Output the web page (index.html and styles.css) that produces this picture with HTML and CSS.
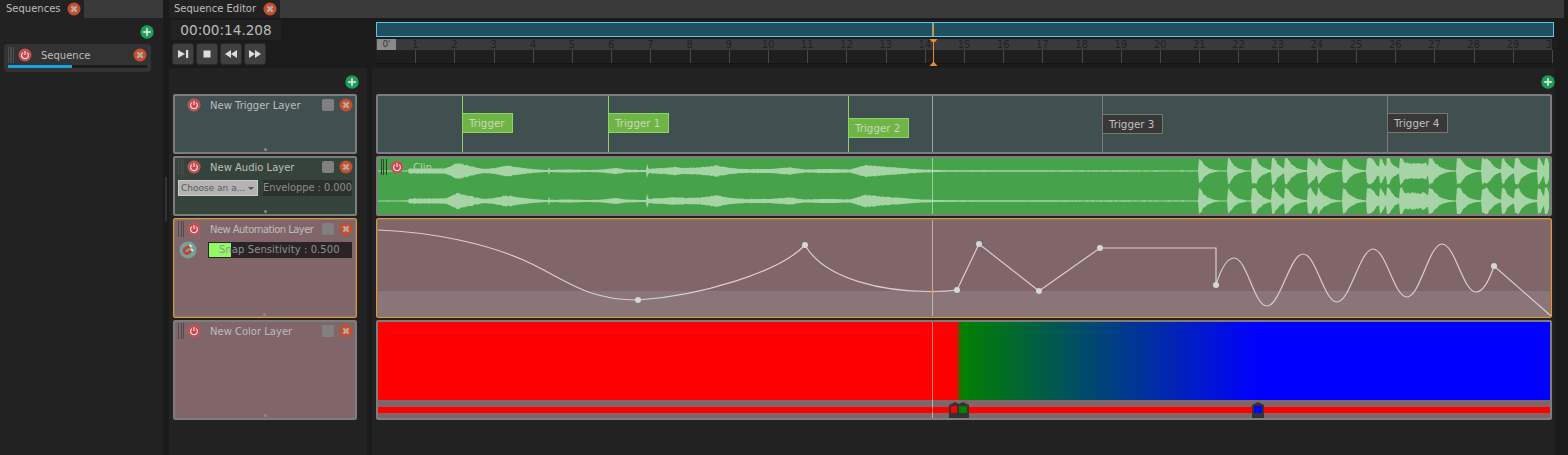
FILE: index.html
```html
<!DOCTYPE html>
<html lang="en">
  <head>
    <meta charset="UTF-8" />
    <title>Sequence Editor</title>
    <link rel="stylesheet" href="styles.css">
  </head>
  <body>
    <!-- shared icons -->
    <svg class="defs" width="0" height="0">
      <symbol id="i-power" viewBox="0 0 14 14">
        <circle cx="7" cy="7" r="6.5" fill="#c9565b"/>
        <circle cx="7" cy="7" r="5.5" fill="#c4484f"/>
        <path d="M4.9 4.6a3.4 3.4 0 1 0 4.2 0" fill="none" stroke="#f2e2e2" stroke-width="1.2"/>
        <path d="M7 3v4" stroke="#f2e2e2" stroke-width="1.2"/>
      </symbol>
      <symbol id="i-close" viewBox="0 0 14 14">
        <circle cx="7" cy="7" r="6.5" fill="#c44f2e"/>
        <path d="M4.4 4.4l5.2 5.2M9.6 4.4l-5.2 5.2" stroke="#b9a8a2" stroke-width="2.2"/>
      </symbol>
      <symbol id="i-add" viewBox="0 0 14 14">
        <circle cx="7" cy="7" r="6.7" fill="#1f9d58"/>
        <path d="M7 3.2v7.6M3.2 7h7.6" stroke="#c9ddcf" stroke-width="2"/>
      </symbol>
    </svg>

    <!-- Sequences panel -->
    <aside class="sequences">
      <div class="tabbar">
        <div class="tab tab-seq">Sequences <svg class="ico tab-x"><use href="#i-close"/></svg></div>
      </div>
      <div class="add-row add-row-seq"><svg class="ico"><use href="#i-add"/></svg></div>
      <div class="seq-card">
        <div class="seq-top">
          <span class="grip"></span>
          <svg class="ico"><use href="#i-power"/></svg>
          <span class="seq-name">Sequence</span>
          <svg class="ico"><use href="#i-close"/></svg>
        </div>
        <div class="seq-progress"><div class="seq-fill"></div></div>
      </div>
    </aside>

    <div class="splitter"><span class="splitter-grip"></span></div>

    <!-- Sequence editor -->
    <main class="editor">
      <div class="tabbar">
        <div class="tab tab-editor">Sequence Editor <svg class="ico tab-x"><use href="#i-close"/></svg></div>
      </div>

      <div class="transport">
        <div class="transport-left">
          <div class="timecode">00:00:14.208</div>
          <div class="buttons">
            <button class="tbtn"><svg viewBox="0 0 14 14"><path d="M2 3l7 4-7 4z M10 3h2.2v8H10z" fill="#ddd"/></svg></button>
            <button class="tbtn"><svg viewBox="0 0 14 14"><path d="M3.5 3.5h7v7h-7z" fill="#ddd"/></svg></button>
            <button class="tbtn"><svg viewBox="0 0 14 14"><path d="M7 3v8L1 7z M13 3v8L7 7z" fill="#ddd"/></svg></button>
            <button class="tbtn"><svg viewBox="0 0 14 14"><path d="M1 3v8l6-4z M7 3v8l6-4z" fill="#ddd"/></svg></button>
          </div>
        </div>
        <div class="transport-right">
          <div class="seekbar"><span class="seek-head"></span></div>
          <div class="ruler">
            <span class="zero">0'</span>
            <div class="cell"><b>1</b></div><div class="cell"><b>2</b></div><div class="cell"><b>3</b></div>
            <div class="cell"><b>4</b></div><div class="cell"><b>5</b></div><div class="cell"><b>6</b></div>
            <div class="cell"><b>7</b></div><div class="cell"><b>8</b></div><div class="cell"><b>9</b></div>
            <div class="cell"><b>10</b></div><div class="cell"><b>11</b></div><div class="cell"><b>12</b></div>
            <div class="cell"><b>13</b></div><div class="cell"><b>14</b></div><div class="cell"><b>15</b></div>
            <div class="cell"><b>16</b></div><div class="cell"><b>17</b></div><div class="cell"><b>18</b></div>
            <div class="cell"><b>19</b></div><div class="cell"><b>20</b></div><div class="cell"><b>21</b></div>
            <div class="cell"><b>22</b></div><div class="cell"><b>23</b></div><div class="cell"><b>24</b></div>
            <div class="cell"><b>25</b></div><div class="cell"><b>26</b></div><div class="cell"><b>27</b></div>
            <div class="cell"><b>28</b></div><div class="cell"><b>29</b></div><div class="cell"><b>30</b></div>
            <svg class="ruler-head" width="9" height="28" viewBox="0 0 9 28">
              <path d="M0.5 0h8L6 3H3zM4 3h1v22H4zM4.5 22.500L8.500 27h-8z" fill="#f0892a"/>
            </svg>
          </div>
        </div>
      </div>

      <div class="body">
        <!-- layer headers -->
        <div class="headers">
          <div class="add-row"><svg class="ico"><use href="#i-add"/></svg></div>

          <div class="layer layer-short trigger-bg">
            <div class="layer-top">
              <span class="grip"></span>
              <svg class="ico"><use href="#i-power"/></svg>
              <span class="layer-name">New Trigger Layer</span>
              <span class="toggle"></span>
              <svg class="ico"><use href="#i-close"/></svg>
            </div>
            <span class="dot"></span>
          </div>

          <div class="layer layer-short audio-bg">
            <div class="layer-top">
              <span class="grip"></span>
              <svg class="ico"><use href="#i-power"/></svg>
              <span class="layer-name">New Audio Layer</span>
              <span class="toggle"></span>
              <svg class="ico"><use href="#i-close"/></svg>
            </div>
            <div class="layer-controls">
              <div class="select"><span>Choose an a...</span><i></i></div>
              <div class="param">Enveloppe : 0.000</div>
            </div>
            <span class="dot"></span>
          </div>

          <div class="layer layer-tall auto-bg selected">
            <div class="layer-top">
              <span class="grip"></span>
              <svg class="ico"><use href="#i-power"/></svg>
              <span class="layer-name layer-name-long">New Automation Layer</span>
              <span class="toggle"></span>
              <svg class="ico"><use href="#i-close"/></svg>
            </div>
            <div class="layer-controls snap-row">
              <svg class="magnet" viewBox="0 0 18 18">
                <circle cx="9" cy="9" r="8.500" fill="#6fa39b"/>
                <path d="M11.500 4.500L6 7.500a3 3 0 0 0 3 5l4-3.500" fill="none" stroke="#c9402c" stroke-width="2.600"/>
                <path d="M10.500 3.500l2 2.500M12 8l2 2" stroke="#e6e6e6" stroke-width="2"/>
              </svg>
              <div class="slider"><span class="slider-fill"></span><span class="slider-text">Snap Sensitivity : 0.500</span></div>
            </div>
            <span class="dot"></span>
          </div>

          <div class="layer layer-tall auto-bg">
            <div class="layer-top">
              <span class="grip"></span>
              <svg class="ico"><use href="#i-power"/></svg>
              <span class="layer-name">New Color Layer</span>
              <span class="toggle"></span>
              <svg class="ico"><use href="#i-close"/></svg>
            </div>
            <span class="dot"></span>
          </div>
        </div>

        <div class="gutter"></div>

        <!-- timelines -->
        <div class="timelines">
          <div class="add-row"><svg class="ico"><use href="#i-add"/></svg></div>

          <div class="clip layer-short trigger-bg">
            <i class="trig-line on" style="left:84px"></i>
            <i class="trig-line on" style="left:230px"></i>
            <i class="trig-line on" style="left:470px"></i>
            <i class="trig-line" style="left:724px"></i>
            <i class="trig-line" style="left:1009px"></i>
            <span class="trigger on" style="left:84px;top:17px;width:51px">Trigger</span>
            <span class="trigger on" style="left:230px;top:17px">Trigger 1</span>
            <span class="trigger on" style="left:470px;top:22px">Trigger 2</span>
            <span class="trigger" style="left:724px;top:18px">Trigger 3</span>
            <span class="trigger" style="left:1009px;top:17px">Trigger 4</span>
            <i class="playhead"></i>
          </div>

          <div class="clip layer-short audio-clip">
            <svg class="wave" viewBox="378 158 1172 56"><path id="wave" fill="#a6d4a6"/></svg>
            <div class="clip-top">
              <span class="grip"></span>
              <svg class="ico"><use href="#i-power"/></svg>
              <span class="clip-name">Clip</span>
            </div>
            <i class="playhead"></i>
          </div>

          <div class="clip layer-tall auto-bg selected">
            <div class="auto-band"></div>
            <i class="playhead"></i>
            <svg class="curve" viewBox="378 220 1172 96">
              <path d="M378,230 C430,232 490,243 534,265 C570,283 590,300 638,300 C700,296 780,272 805,245 C825,280 885,292 933,291.500 C945,291.500 950,291 957,290 L979,244 L1039,291 L1100,248 L1216,248 L1216,285 C1220,272 1226,258 1234,258 C1247,258 1254,306 1267,306 C1280,306 1290,254 1303,254 C1316,254 1324,302 1337,302 C1350,302 1360,249 1373,249 C1386,249 1394,297 1407,297 C1420,297 1429,244 1442,244 C1455,244 1463,292 1476,292 C1484,292 1490,278 1494,266 L1551,316" fill="none" stroke="#d6d0d0" stroke-width="1.200"/>
              <g fill="#d4d8d8">
                <circle cx="638" cy="300" r="3"/><circle cx="805" cy="245" r="3"/>
                <circle cx="957" cy="290" r="3"/><circle cx="979" cy="244" r="3"/>
                <circle cx="1039" cy="291" r="3"/><circle cx="1100" cy="248" r="3"/>
                <circle cx="1216" cy="285" r="3"/><circle cx="1494" cy="266" r="3"/>
              </g>
              <circle cx="933" cy="291.500" r="1.500" fill="#f0a030"/>
            </svg>
          </div>

          <div class="clip layer-tall auto-bg">
            <div class="gradient"></div>
            <div class="preview"></div>
            <svg class="marker" style="left:571px" viewBox="0 0 12 16"><path d="M0 16V3l6-3 6 3v13z" fill="#333"/><path d="M2 4h8v7H2z" fill="#f00"/></svg>
            <svg class="marker" style="left:579px" viewBox="0 0 12 16"><path d="M0 16V3l6-3 6 3v13z" fill="#333"/><path d="M2 4h8v7H2z" fill="#008000"/></svg>
            <svg class="marker" style="left:874px" viewBox="0 0 12 16"><path d="M0 16V3l6-3 6 3v13z" fill="#333"/><path d="M2 4h8v7H2z" fill="#00f"/></svg>
            <i class="playhead"></i>
          </div>
        </div>
      </div>
    </main>

    <script src="wave.js"></script>
  </body>
</html>
```

FILE: styles.css
```css
body {
  font-family: "DejaVu Sans", sans-serif;
  font-size: 10px;
  color: #bdbdbd;
  background: #1b1b1b;
  display: flex;
  height: 455px;
  margin: 0;
  overflow: hidden;
}
.defs {
  position: absolute;
}
.ico {
  width: 14px;
  height: 14px;
  flex: none;
}

/* Tabs */
.tabbar {
  height: 18px;
  background: #3a3a3a;
  display: flex;
}
.tab {
  background: #222;
  line-height: 16px;
  display: flex;
  align-items: center;
  font-size: 10px;
}
.tab-seq {
  width: 78px;
  padding-left: 6px;
}
.tab-editor {
  width: 106px;
  padding-left: 5px;
}
.tab-x {
  margin-left: auto;
  margin-right: 3px;
}

/* Sequences panel */
.sequences {
  width: 163px;
  background: #222;
  flex: none;
}
.add-row {
  height: 26px;
  display: flex;
  justify-content: flex-end;
  align-items: center;
  padding: 2px 8px 0 0;
  box-sizing: border-box;
}
.add-row-seq {
  padding-right: 9px;
}
.seq-card {
  width: 147px;
  height: 28px;
  margin-left: 4px;
  background: #333;
  border-radius: 4px;
  box-sizing: border-box;
  padding: 3px 4px;
}
.seq-top {
  display: flex;
  align-items: center;
  height: 15px;
}
.seq-name {
  margin-left: 9px;
  padding-top: 2px;
  flex: 1;
}
.seq-progress {
  height: 3px;
  margin-top: 3px;
  background: #1c1c1c;
}
.seq-fill {
  width: 46%;
  height: 100%;
  background: #18a6e0;
}
.grip {
  width: 6px;
  height: 16px;
  margin-right: 4px;
  flex: none;
  background: repeating-linear-gradient(90deg, #4c4c4c 0 1px, transparent 1px 2.5px);
}
.splitter {
  width: 6px;
  flex: none;
  padding-top: 177px;
  box-sizing: border-box;
}
.splitter-grip {
  display: block;
  width: 2px;
  height: 44px;
  margin-left: 2px;
  background: #333;
}

/* Transport */
.editor {
  flex: 1;
  min-width: 0;
}
.editor > .tabbar {
  margin-right: 4px;
}
.transport {
  height: 50px;
  display: flex;
  background: #1b1b1b;
}
.transport-left {
  width: 203px;
  padding: 2px 0 0 2px;
  box-sizing: border-box;
  flex: none;
}
.timecode {
  width: 110px;
  height: 20px;
  background: #222;
  text-align: center;
  font-size: 13.600px;
  line-height: 20px;
  color: #bcbcbc;
}
.buttons {
  display: flex;
  gap: 2px;
  margin: 3px 0 0 1px;
}
.tbtn {
  width: 22px;
  height: 22px;
  padding: 3px;
  border: 1px solid #2c2c2c;
  border-radius: 3px;
  background: #404040;
  box-sizing: border-box;
}
.tbtn svg {
  display: block;
  width: 14px;
  height: 14px;
}
.transport-right {
  width: 1178px;
  margin-left: 4px;
  position: relative;
}
.seekbar {
  height: 15px;
  margin-top: 4px;
  border: 1px solid #5cc6ee;
  background: #1f5060;
  box-sizing: border-box;
  position: relative;
}
.seek-head {
  position: absolute;
  left: 555px;
  top: 0;
  width: 2px;
  height: 13px;
  background: #b09a6c;
}
.ruler {
  display: flex;
  width: 1176px;
  height: 25px;
  margin-top: 2px;
  position: relative;
  background: linear-gradient(#3a3a3a 0 11px, #1f1f1f 11px);
  border-bottom: 1px solid #141414;
  box-sizing: border-box;
}
.zero {
  position: absolute;
  left: 1px;
  top: 0;
  width: 19px;
  height: 11px;
  background: #8a8a8a;
  color: #333;
  font-size: 9px;
  line-height: 11px;
  text-align: center;
}
.cell {
  flex: 1;
  position: relative;
}
.cell::after {
  content: "";
  position: absolute;
  right: -1px;
  top: 11px;
  bottom: 0;
  width: 1px;
  background: #484848;
}
.cell b {
  position: absolute;
  right: -10px;
  top: 0;
  width: 20px;
  text-align: center;
  font-weight: normal;
  font-size: 10px;
  line-height: 12px;
  color: #222;
}
.ruler-head {
  position: absolute;
  left: 553px;
  top: 0;
}

/* Main area */
.body {
  display: flex;
  height: 387px;
}
.headers {
  width: 198px;
  background: #222;
  flex: none;
}
.headers .layer {
  margin-left: 4px;
  width: 184px;
}
.gutter {
  width: 5px;
  flex: none;
}
.timelines {
  width: 1183px;
  background: #222;
  flex: none;
}
.timelines .add-row {
  padding-right: 0;
  width: 1183px;
  padding-left: 1169px;
  justify-content: flex-start;
}
.timelines .clip {
  margin-left: 4px;
  width: 1176px;
}
.layer, .clip {
  position: relative;
  border: 2px solid #7d7d7d;
  border-radius: 2px;
  box-sizing: border-box;
  margin-bottom: 2px;
}
.layer-short {
  height: 60px;
}
.layer-tall {
  height: 100px;
}
.trigger-bg {
  background: #405050;
}
.audio-bg {
  background: #35443a;
}
.auto-bg {
  background: #806569;
}
.selected {
  border: 1px solid #f39325;
  box-shadow: inset 0 0 0 1px #7d7d7d;
  padding: 1px;
}
.layer-top {
  display: flex;
  align-items: center;
  height: 18px;
  padding-left: 3px;
}
.layer-top .grip {
  margin-right: 3px;
}
.layer-name {
  margin-left: 9px;
  flex: 1;
  white-space: nowrap;
}
.layer-name-long {
  letter-spacing: -0.550px;
}
.toggle {
  width: 12px;
  height: 12px;
  border-radius: 2px;
  background: #808080;
  margin-right: 5px;
}
.layer-top .ico:last-child {
  margin-right: 2px;
}
.dot {
  position: absolute;
  left: 89px;
  bottom: 1px;
  width: 3px;
  height: 3px;
  border-radius: 50%;
  background: #8b8b8b;
}

/* Layer controls */
.layer-controls {
  display: flex;
  gap: 5px;
  margin-top: 4px;
  padding-left: 3px;
}
.select {
  width: 80px;
  height: 16px;
  background: #b3b3b3;
  border: 1px solid #ccc;
  box-sizing: border-box;
  color: #5a5a5a;
  display: flex;
  align-items: center;
  padding-left: 2px;
  font-size: 9px;
  overflow: hidden;
}
.select span {
  flex: 1;
  white-space: nowrap;
}
.select i {
  width: 0;
  height: 0;
  margin-right: 3px;
  border: 3px solid transparent;
  border-top: 3px solid #555;
  border-bottom: 0;
}
.param {
  width: 89px;
  height: 16px;
  background: #2b322c;
  color: #8e8e8e;
  font-size: 9.800px;
  line-height: 16px;
  white-space: nowrap;
}
.snap-row {
  gap: 11px;
  padding-left: 4px;
  margin-top: 3px;
  align-items: center;
}
.magnet {
  width: 18px;
  height: 18px;
  flex: none;
}
.slider {
  width: 144px;
  height: 16px;
  background: #2a2327;
  position: relative;
  color: #929292;
  line-height: 16px;
  padding-left: 11px;
  letter-spacing: 0.080px;
  box-sizing: border-box;
}
.slider-fill {
  position: absolute;
  left: 1px;
  top: 1px;
  width: 22px;
  height: 14px;
  background: #90f963;
}
.slider-text {
  position: relative;
  white-space: nowrap;
}

/* Clips */
.playhead {
  position: absolute;
  left: 554px;
  top: 0;
  bottom: 0;
  width: 1px;
  background: rgba(235, 235, 235, 0.55);
}
.selected .playhead {
  left: 555px;
  top: 1px;
  bottom: 1px;
}
.trig-line {
  position: absolute;
  top: 0;
  bottom: 0;
  width: 1px;
  background: #7a7a7a;
}
.trig-line.on {
  background: #8fd46a;
}
.trigger {
  position: absolute;
  width: 61px;
  height: 20px;
  box-sizing: border-box;
  background: #383838;
  border: 1px solid #777;
  line-height: 18px;
  padding-left: 6px;
  font-size: 10.300px;
  color: #c0c0c0;
}
.trigger.on {
  background: #6fb545;
  border-color: #8fd46a;
  color: #c9d8c0;
}
.audio-clip {
  background: #47a34a;
}
.audio-clip .grip {
  margin-right: 3px;
  background: repeating-linear-gradient(90deg, #3a3a3a 0 1px, transparent 1px 2.5px);
}
.wave {
  position: absolute;
  left: 0;
  top: 0;
  width: 1172px;
  height: 56px;
}
.clip-top {
  position: relative;
  display: flex;
  align-items: center;
  height: 18px;
  padding-left: 3px;
}
.clip-name {
  margin-left: 9px;
  color: #b3d1b3;
}
.auto-band {
  position: absolute;
  left: 0;
  right: 0;
  bottom: 1px;
  height: 25px;
  background: #8a7579;
}
.curve {
  position: absolute;
  left: 1px;
  top: 1px;
  width: 1172px;
  height: 96px;
  overflow: visible;
}
.gradient {
  height: 78px;
  background: linear-gradient(90deg, #f00 49.300%, #008000 49.800%, #00f 75.100%);
}
.preview {
  height: 6px;
  margin-top: 7px;
  background: #f00;
}
.marker {
  position: absolute;
  top: 80px;
  width: 12px;
  height: 16px;
}
```

FILE: wave.js
```js
// envelope of the quiet part: [x, half height]
const env = [
  [378, 0.6], [408, 0.6], [409, 2.5], [425, 2.5], [445, 2.5], [449, 4], [458, 8], [470, 5], [484, 2],
  [495, 3], [505, 5.5], [520, 3.5], [532, 2], [545, 1], [570, 1.5], [590, 1], [603, 1.5], [615, 3],
  [626, 1.5], [645, 1], [652, 2.5], [665, 3], [672, 4], [685, 3], [700, 3.5], [717, 5.5], [730, 3],
  [745, 2], [770, 2], [790, 3.5], [805, 1.5], [822, 2], [835, 2], [850, 1.5], [865, 6], [880, 4.5],
  [895, 3.5], [908, 2.5], [922, 1.5], [945, 0.8], [1198, 0.6]
];
// drum hits: [x, plateau, decay, peak]
const hits = [
  [1199, 1, 6, 13], [1228, 1, 6, 13], [1252, 4, 6, 13], [1272, 2, 6, 13], [1285, 2, 7, 13],
  [1308, 3, 6, 13], [1318, 1, 7, 13], [1343, 2, 7, 13], [1367, 5, 6, 13], [1380, 1, 5, 13],
  [1387, 2, 6, 13], [1400, 2, 5, 13], [1404, 22, 5, 8], [1429, 3, 7, 13], [1457, 3, 7, 13],
  [1482, 6, 6, 13], [1502, 2, 6, 13], [1515, 3, 7, 13], [1538, 2, 4, 13], [1545, 2, 4, 13]
];
const spikes = { 549: 4, 647: 7, 648: 4 };

let seed = 7;
function noise() {
  seed = (seed * 73 + 11) % 1009;
  return seed / 1009;
}

function amp(x) {
  let a = 0.6;
  for (let i = 0; i < env.length - 1; i++) {
    if (x >= env[i][0] && x <= env[i + 1][0]) {
      const t = (x - env[i][0]) / (env[i + 1][0] - env[i][0]);
      a = env[i][1] + (env[i + 1][1] - env[i][1]) * t;
    }
  }
  for (const [hx, flat, decay, peak] of hits) {
    if (x < hx) continue;
    const d = Math.max(0, x - hx - flat);
    a = Math.max(a, peak * Math.exp(-d / decay));
  }
  a *= 0.88 + noise() * 0.24;
  return Math.max(spikes[x] || 0, Math.min(a, 13.5));
}

function channel(cy) {
  const top = [];
  const bottom = [];
  for (let x = 378; x < 1550; x++) {
    const a = amp(x);
    top.push(x + "," + (cy - a).toFixed(1));
    bottom.unshift(x + "," + (cy + a).toFixed(1));
  }
  return "M" + top.concat(bottom).join("L") + "Z";
}

document.getElementById("wave").setAttribute("d", channel(171) + channel(201));
```
